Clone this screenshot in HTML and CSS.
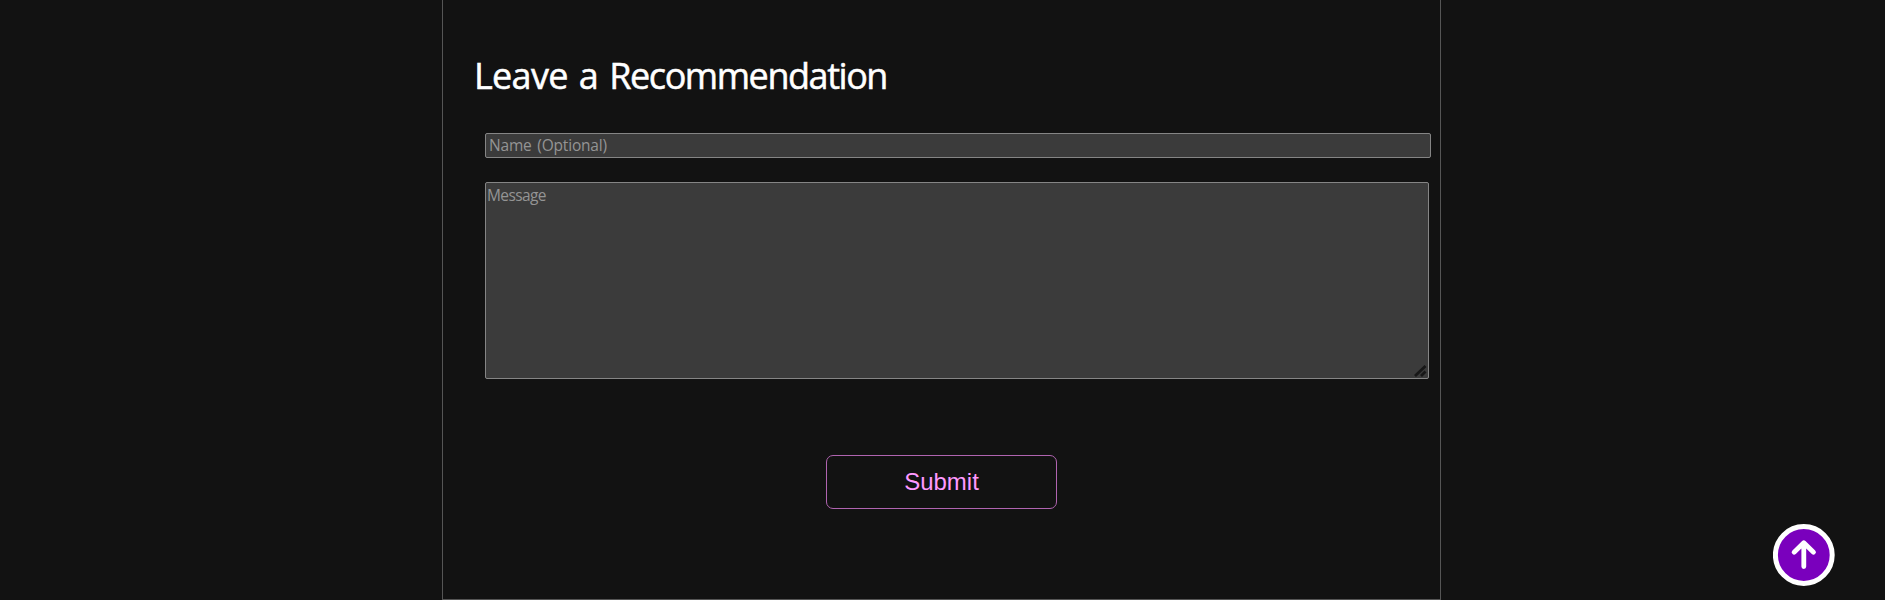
FILE: index.html
```html
<!DOCTYPE html>
<html lang="en">
<head>
<meta charset="utf-8">
<title>Leave a Recommendation</title>
<link rel="stylesheet" href="styles.css">
</head>
<body>
<main class="panel">
  <h1 class="title">Leave a <span class="title-tight">Recommendation</span></h1>
  <form class="form">
    <input class="field name" type="text" placeholder="Name (Optional)">
    <div class="message-wrap">
      <textarea class="field message" placeholder="Message"></textarea>
      <svg class="grip" width="13" height="12" viewBox="0 0 13 12">
        <path d="M1 11L11.5 1M7 11L11.5 6.5" fill="none" stroke="#171717" stroke-width="2.8"/>
      </svg>
    </div>
    <button class="submit" type="button">Submit</button>
  </form>
</main>
<a class="to-top" href="#" aria-label="Back to top">
  <svg width="62" height="62" viewBox="0 0 62 62">
    <circle cx="30.8" cy="31" r="28.4" fill="#7a00bd" stroke="#fff" stroke-width="5"/>
    <path d="M30.8 42.5V19.5M21.1 28.2L30.8 18.8L40.5 28.2" fill="none" stroke="#fff" stroke-width="4.8" stroke-linecap="round" stroke-linejoin="round"/>
  </svg>
</a>
</body>
</html>
```
FILE: styles.css
```css
body {
  margin: 0;
  height: 600px;
  overflow: hidden;
  background: #121212;
  font-family: "Trebuchet MS", "Open Sans", sans-serif;
}
.panel {
  box-sizing: border-box;
  width: 999px;
  height: 600px;
  margin-left: 442px;
  padding: 51px 9px 0 31px;
  border: 1px solid #555;
  border-top: 0;
}
.title {
  margin: 0;
  color: #fff;
  font-size: 36px;
  font-weight: 400;
  line-height: 50px;
  letter-spacing: -0.7px;
  word-spacing: 2.5px;
  white-space: nowrap;
  -webkit-text-stroke: 0.5px #fff;
}
.title-tight {
  letter-spacing: -1.45px;
}
.form {
  display: flex;
  flex-direction: column;
  margin: 32px 0 0 11px;
}
.field {
  box-sizing: border-box;
  margin: 0;
  border: 1px solid #858585;
  border-radius: 2px;
  outline: 0;
  background: #3b3b3b;
  color: #fff;
  font-family: inherit;
  font-size: 15.5px;
}
.field::placeholder {
  color: #949494;
}
.name {
  width: 946px;
  height: 25px;
  padding: 0 2px 1px 3px;
  letter-spacing: -0.2px;
  word-spacing: 2px;
}
.message-wrap {
  position: relative;
  width: 944px;
  height: 197px;
  margin-top: 24px;
}
.message {
  display: block;
  width: 100%;
  height: 100%;
  padding: 2px 2px 2px 1px;
  line-height: 20px;
  letter-spacing: -0.6px;
  resize: none;
}
.grip {
  position: absolute;
  right: 2px;
  bottom: 2px;
}
.submit {
  width: 231px;
  height: 54px;
  margin: 76px 0 0 341px;
  padding: 0;
  border: 1px solid #b064b0;
  border-radius: 7px;
  background: transparent;
  color: #ff99ff;
  font-family: "Liberation Sans", Arial, sans-serif;
  font-size: 24px;
}
.to-top {
  position: fixed;
  left: 1773px;
  top: 524px;
  width: 62px;
  height: 62px;
}
.to-top svg {
  display: block;
}
```
